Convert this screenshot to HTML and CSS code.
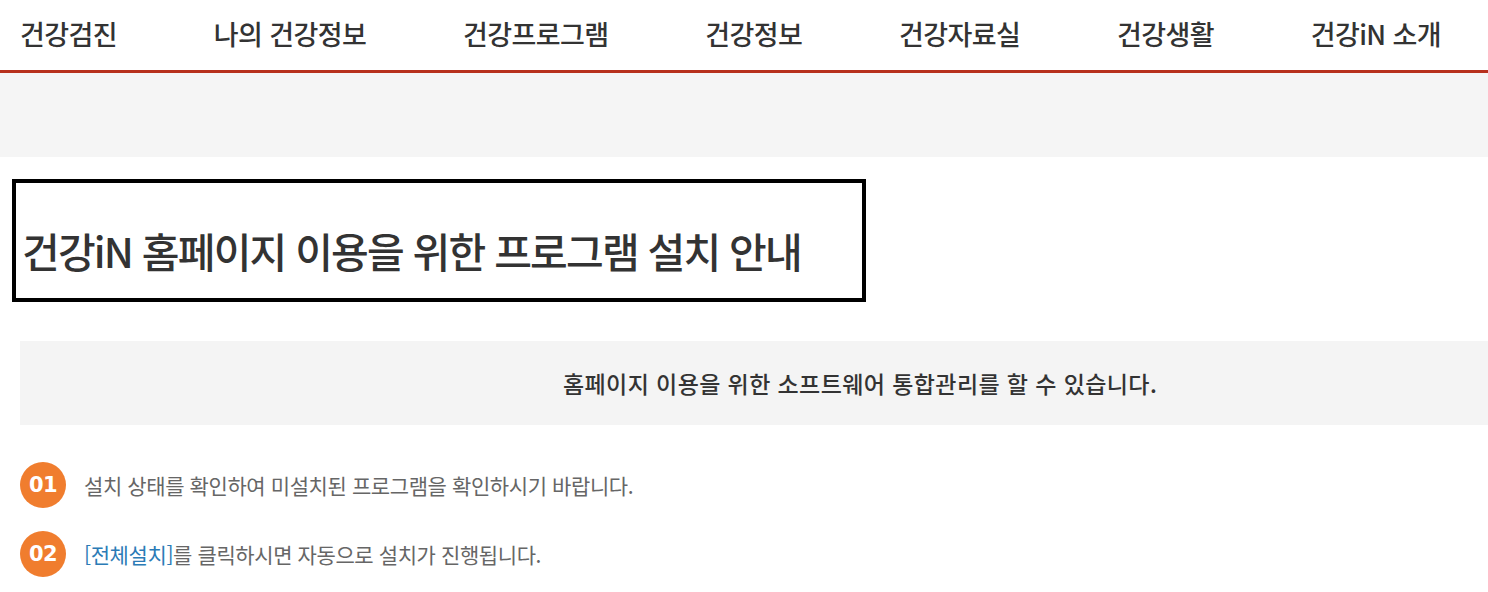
FILE: index.html
```html
<!DOCTYPE html>
<html lang="ko">
<head>
<meta charset="utf-8">
<title>건강iN 프로그램 설치 안내</title>
<link rel="stylesheet" href="styles.css">
</head>
<body>
<header class="gnb">
  <a class="gnb-item" href="#">건강검진</a>
  <a class="gnb-item" href="#">나의 건강정보</a>
  <a class="gnb-item" href="#">건강프로그램</a>
  <a class="gnb-item" href="#">건강정보</a>
  <a class="gnb-item" href="#">건강자료실</a>
  <a class="gnb-item" href="#">건강생활</a>
  <a class="gnb-item" href="#">건강iN 소개</a>
</header>
<div class="band"></div>
<main class="content">
  <div class="title-box">
    <h2 class="title">건강iN 홈페이지 이용을 위한 프로그램 설치 안내</h2>
  </div>
  <div class="notice">홈페이지 이용을 위한 소프트웨어 통합관리를 할 수 있습니다.</div>
  <ol class="steps">
    <li class="step"><span class="num">01</span><span class="step-text">설치 상태를 확인하여 미설치된 프로그램을 확인하시기 바랍니다.</span></li>
    <li class="step"><span class="num">02</span><span class="step-text"><a class="link" href="#">[전체설치]</a>를 클릭하시면 자동으로 설치가 진행됩니다.</span></li>
  </ol>
</main>
</body>
</html>
```
FILE: styles.css
```css
* { box-sizing: border-box; }
html, body { margin: 0; padding: 0; background: #fff; }
body {
  font-family: "Noto Sans CJK KR", "Noto Sans", sans-serif;
  color: #333;
  overflow: hidden;
}
.gnb {
  height: 73px;
  border-bottom: 3px solid #b7311d;
  display: flex;
  align-items: center;
  justify-content: space-between;
  padding: 0 47px 0 20px;
}
.gnb-item {
  color: #333;
  text-decoration: none;
  font-size: 27px;
  font-weight: 500;
  letter-spacing: -0.6px;
  line-height: 1;
  margin-top: -3px;
}
.band {
  height: 84px;
  background: #f5f5f5;
}
.content { padding: 0; }
.title-box {
  margin: 22px 0 0 12px;
  width: 854px;
  height: 123px;
  border: 4px solid #000;
  display: flex;
  align-items: flex-end;
  padding: 0 0 27px 6px;
}
.title {
  margin: 0;
  font-size: 41px;
  font-weight: 500;
  letter-spacing: -1.8px;
  line-height: 1;
  color: #333;
}
.notice {
  margin: 39px 0 0 20px;
  height: 84px;
  background: #f4f4f4;
  display: flex;
  align-items: center;
  padding-left: 543px;
  font-size: 23px;
  font-weight: 500;
  letter-spacing: 0.4px;
  color: #333;
}
.steps {
  list-style: none;
  margin: 37px 0 0 20px;
  padding: 0;
  display: flex;
  flex-direction: column;
  gap: 23px;
}
.step {
  display: flex;
  align-items: center;
  gap: 18px;
}
.num {
  width: 46px;
  height: 46px;
  border-radius: 50%;
  background: #f07d2e;
  color: #fff;
  font-family: "DejaVu Sans", sans-serif;
  font-weight: 700;
  font-size: 21px;
  letter-spacing: -0.5px;
  display: flex;
  align-items: center;
  justify-content: center;
  flex: none;
}
.step-text {
  font-size: 21px;
  letter-spacing: -0.4px;
  color: #666;
}
.link {
  color: #2b7bb6;
  text-decoration: none;
}
```
